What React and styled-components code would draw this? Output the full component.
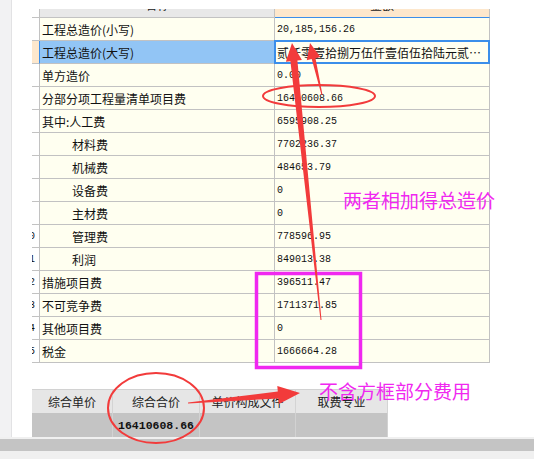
import React from 'react';
import styled, { createGlobalStyle, css } from 'styled-components';

const GlobalStyle = createGlobalStyle`
    html, body {
        margin: 0;
        padding: 0;
        background: #ffffff;
        overflow: hidden;
    }
`;

const CJK = `"Noto Sans CJK SC", "Noto Sans", sans-serif`;
const MONO = `"Liberation Mono", "DejaVu Sans Mono", monospace`;
const GRID = '#c2c2c2';
const CREAM = '#fffff0';
const PEACH = '#fde7cc';
const BLUE = '#3b8eea';

const Page = styled.div`
    position: relative;
    width: 534px;
    height: 459px;
    overflow: hidden;
    display: flex;
    flex-direction: column;
    font-family: ${CJK};
    color: #111;
`;

const Body = styled.div`
    display: flex;
    height: 437px;
`;

const LeftStrip = styled.div`
    width: 11px;
    background: #f2f2f3;
    border-right: 1px solid #e2e2e4;
`;

const Content = styled.div`
    flex: 1;
    padding: 9px 0 0 20px;
    display: flex;
    flex-direction: column;
`;

const Row = styled.div`
    display: grid;
    grid-template-columns: 8px 235px 215px;
    height: ${p => (p.$head ? 9 : 23)}px;
`;

const RowHead = styled.div`
    box-sizing: border-box;
    display: flex;
    justify-content: flex-end;
    align-items: center;
    overflow: hidden;
    padding-right: 4px;
    background: ${p => (p.$sel ? PEACH : '#ffffff')};
    border-bottom: 1px solid ${GRID};
    border-right: 1px solid ${p => (p.$sel ? BLUE : GRID)};
    font-family: ${MONO};
    font-size: 10px;
    white-space: nowrap;
`;

const HeadCell = styled.div`
    box-sizing: border-box;
    display: flex;
    justify-content: center;
    align-items: flex-end;
    overflow: hidden;
    background: ${p => (p.$value ? PEACH : '#e8e8e8')};
    border-right: 1px solid ${GRID};
    border-bottom: 1px solid ${p => (p.$value ? BLUE : GRID)};
    font-size: 12px;
    line-height: 12px;
    color: #222;
    span {
        margin-bottom: 6px;
    }
`;

const Label = styled.div`
    box-sizing: border-box;
    display: flex;
    align-items: center;
    padding-left: ${p => (p.$indent ? 32 : 2)}px;
    background: ${p => (p.$sel ? '#92c5f5' : CREAM)};
    border-right: 1px solid ${GRID};
    border-bottom: 1px solid ${GRID};
    font-size: 12px;
    white-space: nowrap;
`;

const Value = styled.div`
    position: relative;
    box-sizing: border-box;
    display: flex;
    align-items: center;
    padding-left: 2px;
    background: ${CREAM};
    border-right: 1px solid ${GRID};
    border-bottom: 1px solid ${GRID};
    font-family: ${p => (p.$cn ? CJK : MONO)};
    font-size: ${p => (p.$cn ? 12 : 10)}px;
    white-space: nowrap;
    overflow: visible;
    ${p => p.$sel && css`
        &::after {
            content: '';
            position: absolute;
            left: -1px;
            top: -1px;
            right: -1px;
            bottom: -1px;
            border: 2px solid ${BLUE};
        }
    `}
`;

const Tabs = styled.div`
    margin-top: 26px;
    display: grid;
    grid-template-columns: 81px 87px 96px 92px;
    grid-template-rows: 24px 24px;
    width: 356px;
`;

const TabHead = styled.div`
    display: flex;
    align-items: center;
    justify-content: center;
    background: #e6e6e6;
    border-top: 1px solid #d2d2d2;
    border-right: 1px solid #d4d4d4;
    font-size: 12px;
    color: #222;
`;

const TabCell = styled.div`
    display: flex;
    align-items: center;
    justify-content: center;
    background: #c4c4c4;
    border-right: 1px solid #d2d2d2;
    font-family: ${MONO};
    font-weight: bold;
    font-size: 11.5px;
    color: #111;
`;

const Scroll = styled.div`
    height: 22px;
    background: #f0f0f0;
    display: flex;
    flex-direction: column;
    padding-top: 2px;
    box-sizing: border-box;
    &::before {
        content: '';
        height: 12px;
        background: #c4c4c4;
    }
`;

const Overlay = styled.svg`
    position: absolute;
    left: 0;
    top: 0;
    pointer-events: none;
`;

const Note = styled.div`
    position: absolute;
    left: ${p => p.$x}px;
    top: ${p => p.$y}px;
    font-size: 19px;
    line-height: 19px;
    color: #f028f0;
    white-space: nowrap;
    pointer-events: none;
`;

const rows = [
    { n: '1', label: '工程总造价(小写)', value: '20,185,156.26' },
    { n: '2', label: '工程总造价(大写)', value: '贰仟零壹拾捌万伍仟壹佰伍拾陆元贰…', sel: true, cn: true },
    { n: '3', label: '单方造价', value: '0.00' },
    { n: '4', label: '分部分项工程量清单项目费', value: '16410608.66' },
    { n: '5', label: '其中:人工费', value: '6595908.25' },
    { n: '6', label: '材料费', value: '7702236.37', indent: true },
    { n: '7', label: '机械费', value: '484653.79', indent: true },
    { n: '8', label: '设备费', value: '0', indent: true },
    { n: '9', label: '主材费', value: '0', indent: true },
    { n: '10', label: '管理费', value: '778596.95', indent: true },
    { n: '11', label: '利润', value: '849013.38', indent: true },
    { n: '12', label: '措施项目费', value: '396511.47' },
    { n: '13', label: '不可竞争费', value: '1711371.85' },
    { n: '14', label: '其他项目费', value: '0' },
    { n: '15', label: '税金', value: '1666664.28' },
];

const tabs = ['综合单价', '综合合价', '单价构成文件', '取费专业'];

function Annotations() {
    return (
        <Overlay width="534" height="459" viewBox="0 0 534 459">
            <ellipse cx="319" cy="96" rx="56" ry="11" fill="none" stroke="#f23b3b" strokeWidth="2" />
            <ellipse cx="156" cy="408" rx="48" ry="35" fill="none" stroke="#f23b3b" strokeWidth="2" />
            <rect x="256.5" y="273.5" width="104" height="94" fill="none" stroke="#f028f0" strokeWidth="3.5" />
            <polygon fill="#f23b3b" points="292,43 301.9,60.1 297.4,60.5 321.5,319.9 320.5,320.1 290.4,61.3 285.9,61.7" />
            <polygon fill="#f23b3b" points="310,43 320.4,57 315.5,58.2 322.5,94.9 321.5,95.1 311.7,59 306.8,60.2" />
            <polygon fill="#f23b3b" points="300,393 278.9,404 278.4,398.5 188,403.5 188,402.5 277.8,391.5 277.3,386" />
        </Overlay>
    );
}

export default function App() {
    return (
        <Page>
            <GlobalStyle />
            <Body>
                <LeftStrip />
                <Content>
                    <Row $head>
                        <RowHead />
                        <HeadCell><span>名称</span></HeadCell>
                        <HeadCell $value><span>金额</span></HeadCell>
                    </Row>
                    {rows.map(r => (
                        <Row key={r.n}>
                            <RowHead $sel={r.sel}>{r.n.length > 1 ? r.n : ''}</RowHead>
                            <Label $sel={r.sel} $indent={r.indent}>{r.label}</Label>
                            <Value $sel={r.sel} $cn={r.cn}>{r.value}</Value>
                        </Row>
                    ))}
                    <Tabs>
                        {tabs.map(t => <TabHead key={t}>{t}</TabHead>)}
                        <TabCell />
                        <TabCell>16410608.66</TabCell>
                        <TabCell />
                        <TabCell />
                    </Tabs>
                </Content>
            </Body>
            <Scroll />
            <Annotations />
            <Note $x={343} $y={190}>两者相加得总造价</Note>
            <Note $x={319} $y={381}>不含方框部分费用</Note>
        </Page>
    );
}
